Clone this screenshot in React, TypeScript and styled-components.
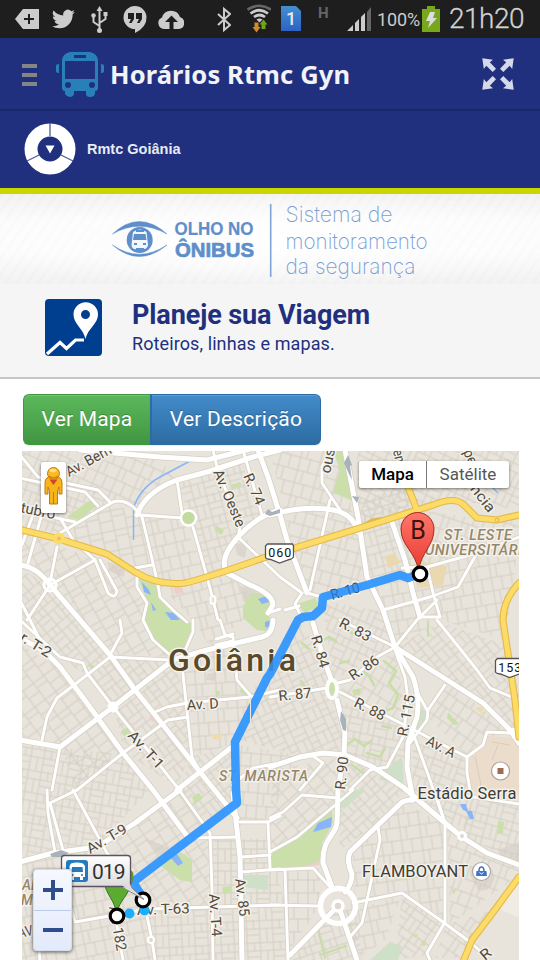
import React from "react";
import styled, { createGlobalStyle, css } from "styled-components";

const Global = createGlobalStyle`
  * { box-sizing: border-box; }
  html, body { margin: 0; padding: 0; }
  body { width: 540px; height: 960px; overflow: hidden; background: #fff; font-family: Roboto, "Noto Sans", sans-serif; }
  svg { display: block; }
`;

const Screen = styled.div`
  display: flex;
  flex-direction: column;
  width: 540px;
  height: 960px;
  overflow: hidden;
  background: #fff;
`;

/* ---------- status bar ---------- */

const StatusBar = styled.div`
  display: flex;
  align-items: center;
  height: 38px;
  flex: none;
  background: #1e1e1e;
  color: #ccc;
  padding-left: 15px;
`;

const Slot = styled.div<{ $w: number; $gap?: number }>`
  flex: none;
  width: ${(p) => p.$w}px;
  margin-right: ${(p) => p.$gap ?? 0}px;
`;

const Network = styled(Slot)`
  height: 26px;
  font: 700 15px/15px Roboto, sans-serif;
  color: #666;
`;

const Percent = styled(Slot)`
  font-size: 18px;
  line-height: 38px;
  padding-top: 1px;
  letter-spacing: -0.1px;
  white-space: nowrap;
`;

const Clock = styled.div`
  font-size: 28px;
  line-height: 36px;
  font-weight: 300;
  color: #d2d2d2;
  letter-spacing: -0.5px;
  padding-left: 1px;
  -webkit-text-stroke: 0.3px #d2d2d2;
`;

/* ---------- app header ---------- */

const Header = styled.header`
  display: flex;
  align-items: center;
  flex: none;
  height: 73px;
  background: #20307f;
  border-bottom: 2px solid #1a2768;
  padding: 0 26px 0 22px;
`;

const Menu = styled.div`
  display: flex;
  flex-direction: column;
  gap: 5px;
  width: 15px;
  margin: 2px 19px 0 0;
`;

const MenuBar = styled.span`
  height: 4px;
  background: #858585;
`;

const Title = styled.h1`
  flex: 1;
  margin: 0 0 0 6px;
  color: #f1f3f8;
  font: 700 25.5px/36px "Noto Sans", "Open Sans", sans-serif;
  letter-spacing: 0.12px;
  white-space: nowrap;
`;

const Brand = styled.div`
  display: flex;
  align-items: center;
  flex: none;
  height: 83px;
  padding: 0 0 2px 24px;
  gap: 10px;
  background: #20307f;
  border-bottom: 6px solid #cbd600;
`;

const Promo = styled.div`
  flex: none;
  height: 90px;
  background: radial-gradient(ellipse 60% 55% at 50% 50%, rgba(255, 255, 255, 0.95), rgba(255, 255, 255, 0) 100%),
    repeating-linear-gradient(125deg, rgba(0, 0, 0, 0.012) 0 2px, transparent 4px 9px),
    linear-gradient(#f2f2f2, #fcfcfc 30%, #fcfcfc 65%, #f2f2f2);
`;

/* ---------- section title ---------- */

const Section = styled.section`
  display: flex;
  flex: none;
  height: 95px;
  padding: 15px 0 0 45px;
  gap: 30px;
  background: #f5f5f5;
  border-bottom: 2px solid #c6c6c6;
  color: #20307f;
`;

const SectionTitle = styled.h2`
  margin: 0;
  font-size: 27px;
  line-height: 32px;
  font-weight: 700;
  letter-spacing: -0.1px;
`;

const SectionText = styled.p`
  margin: 0;
  font-size: 18px;
  line-height: 26px;
  letter-spacing: 0.1px;
`;

const Tabs = styled.div`
  display: flex;
  flex: none;
  margin: 15px 0 6px 23px;
`;

const Tab = styled.button<{ $kind: "map" | "text" }>`
  height: 51px;
  padding: 0 0 1px;
  font: 400 21px Roboto, sans-serif;
  letter-spacing: 0.2px;
  color: #fff;
  text-shadow: 0 -1px 0 rgba(0, 0, 0, 0.25);
  ${(p) =>
    p.$kind === "map"
      ? css`
          width: 127px;
          border: 1px solid #419641;
          border-right: 0;
          border-radius: 6px 0 0 6px;
          background: linear-gradient(#5cb85c, #419641);
        `
      : css`
          width: 171px;
          border: 1px solid #2d6ca2;
          border-left-width: 2px;
          border-radius: 0 6px 6px 0;
          background: linear-gradient(#428bca, #2d6ca2);
        `}
  box-shadow: inset 0 1px 0 rgba(255, 255, 255, 0.15), 0 1px 1px rgba(0, 0, 0, 0.08);
`;

/* ---------- map ---------- */

const MapFrame = styled.div`
  position: relative;
  width: 497px;
  height: 509px;
  flex: none;
  margin-left: 22px;
  overflow: hidden;
  background: #e8e4db;
`;

const PegmanBox = styled.div`
  position: absolute;
  left: 19px;
  top: 11px;
  width: 25px;
  height: 51px;
  border-radius: 2px;
  background: #fff;
  box-shadow: 0 1px 3px rgba(0, 0, 0, 0.5);
`;

const MapTypes = styled.div`
  position: absolute;
  right: 10px;
  top: 10px;
  display: flex;
  height: 27px;
  background: #fff;
  border-radius: 2px;
  box-shadow: 0 1px 3px rgba(0, 0, 0, 0.5);
`;

const MapType = styled.div<{ $active?: boolean }>`
  width: ${(p) => (p.$active ? 67 : 83)}px;
  text-align: center;
  font-size: 17px;
  line-height: 27px;
  font-weight: ${(p) => (p.$active ? 500 : 400)};
  color: ${(p) => (p.$active ? "#000" : "#565656")};
  border-left: ${(p) => (p.$active ? "0" : "1px solid #777")};
`;

const ZoomBox = styled.div`
  position: absolute;
  left: 11px;
  top: 418px;
  width: 39px;
  height: 82px;
  display: flex;
  flex-direction: column;
  border-radius: 4px;
  border: 1px solid #d4dcef;
  background: linear-gradient(#f5f8ff, #e3eafb);
  box-shadow: 0 1px 3px 1px rgba(60, 60, 60, 0.55);
`;

const ZoomButton = styled.div`
  flex: 1;
  display: flex;
  align-items: center;
  justify-content: center;
  & + & {
    border-top: 1px solid #bccbe8;
  }
`;

const major = [
  "M80 450 160 457 207 460 250 449",
  "M258 450 268 477 280 515 287 540 307 593",
  "M20 565 Q37 567 50 585L80 620 110 655 135 690 163 725 200 772 237 818",
  "M20 640Q38 643 60 667L87 703 123 753 153 790 190 840",
  "M345 450 358 517 367 577 383 610 395 647 413 677Q420 697 417 717L408 743 407 767 413 800",
  "M392 522 405 560 413 593 420 617",
  "M395 647 447 680 483 703 510 730 519 743M510 732L519 728",
  "M20 740 60 747 113 707 173 660 207 650 262 637Q273 634 273 620",
  "M270 767 300 757 323 753 345 755 373 767 403 787 445 823 462 837 487 853 519 865",
  "M313 623 323 657 332 682M337 700 345 733 344 753 338 790 337 823C336 835 322 838 323 863L332 887",
  "M413 800Q403 800 400 804L350 852Q346 860 352 874 352 884 345 892",
  "M280 510Q258 515 238 537T227 573L250 585Q273 594 273 605L268 613",
  "M137 515Q145 492 177 480L207 472 253 457 280 450",
  "M337 907 290 955M340 910 357 960",
  "M233 793 240 857 242 960",
  "M177 790 232 747M180 790 135 823 97 847 53 853 20 862",
  "M270 515Q300 506 327 509T357 532",
];

const middle = [
  "M177 480 182 513M193 527 207 577 213 600 218 620M140 515 183 518",
  "M20 455 38 477 98 490 110 502M20 478 85 492 98 506",
  "M60 533 113 502Q128 497 142 517L153 563 158 585 160 597 173 610 187 622",
  "M60 518 73 540 95 560 108 593Q115 600 117 591L100 560",
  "M50 585 95 560M50 585 27 620M57 547 50 583M20 510 75 522",
  "M243 450 262 515M213 450 217 467 240 527 238 537 280 577 302 593",
  "M43 510 28 563M34 512 22 545M135 568 152 565M137 572V587L147 603 143 620 153 640 170 655",
  "M322 467V483L332 498 342 513M330 500 310 590M322 467 330 450",
  "M402 568 427 567 477 553 519 537M427 567 433 593 440 617M383 610 430 597 458 587 477 553",
  "M437 600 417 620 395 647M437 620 477 670 490 688 519 700M420 617H440",
  "M467 757 483 745 487 732 510 733M467 757V773L470 790",
  "M395 647 377 657 350 680 338 683M270 697 327 688M340 692 410 728 467 757M340 620 395 647",
  "M445 685 428 710 427 720 410 743M427 710 416 690",
  "M395 650 405 677 408 700 403 737 387 767 370 770 350 790",
  "M300 790 323 763 314 757M413 733 430 780 445 823V922L427 953 430 960",
  "M353 903 402 893 443 922 470 942 487 957M270 905 318 906",
  "M270 870 313 868 330 887M285 870 288 960M378 827 380 840 362 923 350 937",
  "M270 818 283 812 302 795 338 798M353 790 297 837 270 852",
  "M20 620 60 657 83 663 87 673 113 707 150 753 177 787 210 833 212 890 213 960",
  "M60 747 52 790M42 740 47 717 57 698 87 675 110 657 170 660M110 655 122 633 120 620",
  "M77 790 123 753 168 720 188 717M155 712 167 707 187 703 250 697 280 690",
  "M182 665 192 757 200 772M193 620V632L183 655M193 838 237 837M240 822 268 822 280 816",
  "M268 822 270 868M242 872 280 869M241 857 270 855",
  "M75 922 115 915 147 909 280 905M75 922 65 888",
  "M73 790 107 853 143 897 152 940 155 960M50 803 77 790M63 850 50 803M55 852 48 813 47 790",
  "M220 620 225 635 233 637 237 680 250 695M216 639 233 634M216 645 233 641",
  "M232 785 253 768 280 763M307 593 322 597M302 593 295 604 303 620M285 610 299 606",
  "M20 600 40 640M115 915 123 960M36 920 40 960M445 823 437 798M460 795 519 804",
  "M268 613 280 609",
];

const parks = [
  "67,517 90,500 97,505 80,520",
  "138,578 157,584 160,597 187,620 193,625 183,650 170,654 153,640 144,622 148,603",
  "250,593 268,593 273,603 269,615 272,632 257,630 243,618 243,607",
  "333,450 345,450 357,503 333,492 340,470",
  "270,853 300,838 332,808 333,823 322,843 323,860 300,867 270,867",
  "157,863 177,850 192,860 192,882 180,880",
  "297,604 315,598 320,606 305,613",
  "215,690 221,692 217,697",
  "243,686 246,694 239,692",
  "88,663 96,667 92,671",
  "121,731 129,727 132,734 124,736",
  "216,525 224,531 221,535 215,530",
  "230,485 240,482 242,485 233,489",
  "192,797 199,793 203,798 195,804",
  "222,887 232,886 231,893 223,893",
  "498,821 504,822 503,833 497,834",
  "411,935 418,934 416,938",
  "422,941 426,941 425,946 421,945",
  "448,712 459,724 454,725 447,718",
  "452,890 457,889 453,895",
  "352,690 361,688 360,694 354,696",
];

const pale = [
  "418,703 428,715 420,732 415,725",
  "390,942 402,946 398,960 370,960",
  "335,806 355,790 366,790 344,809",
  "242,875 268,875 268,890 242,887",
  "378,780 391,765 402,757 404,783",
];

const waters = [
  "142,582 149,590 151,595 144,592",
  "151,602 156,610 153,611",
  "165,612 174,613 180,620 171,620",
  "258,599 269,595 269,602 262,604",
  "313,832 318,823 332,817 331,827",
  "171,858 177,854 183,863 178,866",
  "460,804 466,804 468,812 463,810",
  "466,811 472,811 474,819 470,819",
  "265,622 271,620 270,628 265,627",
];

const blocks: [string, number, string][] = [
  ["22,451 80,451 160,458 175,480 145,497 140,513 113,500 60,485 22,478", 24, "a"],
  ["22,478 98,492 110,503 60,533 22,528", 20, "b"],
  ["60,535 113,504 140,515 153,563 135,570 107,552", 78, "a"],
  ["142,518 182,518 207,576 175,582 155,578", -13, "a"],
  ["177,480 240,460 262,512 226,555 225,570 208,575", -15, "b"],
  ["22,532 135,574 146,606 152,640 170,657 110,654 50,585 22,565", 60, "a"],
  ["22,570 48,584 110,655 85,674 60,658 22,620", -40, "b"],
  ["160,586 225,573 250,586 243,620 210,647 193,620", -14, "a"],
  ["110,657 170,660 113,706 87,674", 53, "b"],
  ["22,645 58,668 120,752 77,790 60,747 22,738", 53, "a"],
  ["22,742 60,748 124,754 150,790 97,846 22,860", 10, "b"],
  ["114,708 172,661 188,700 190,755 177,787 124,752", 53, "b"],
  ["184,665 228,637 237,680 270,690 235,743 194,757", -4, "a"],
  ["190,757 232,747 236,800 210,830 180,790", -38, "b"],
  ["100,847 180,792 210,832 212,905 147,908", 56, "a"],
  ["22,864 97,848 143,898 152,960 22,960", -12, "a"],
  ["145,911 285,905 288,960 155,960", -3, "b"],
  ["213,840 270,838 285,905 213,905", 0, "b"],
  ["240,745 300,755 270,818 240,825", 5, "a"],
  ["270,675 298,620 322,655 345,750 300,756 240,740", 65, "b"],
  ["269,451 340,451 366,578 322,597 300,590 285,510", 15, "a"],
  ["355,503 410,485 427,567 368,578", -15, "b"],
  ["418,510 490,520 519,516 519,537 427,567", 18, "a"],
  ["357,451 519,451 519,510 455,500 358,525", 25, "b"],
  ["369,580 519,540 505,640 440,620 395,647", -10, "a"],
  ["440,622 505,645 519,690 519,735 447,680 396,647", 50, "b"],
  ["322,600 382,612 395,647 333,680", 24, "b"],
  ["337,692 395,650 408,725", 32, "a"],
  ["339,700 410,728 400,785 345,755", 12, "b"],
  ["425,715 447,682 510,730 485,745 468,757", 35, "a"],
  ["412,740 468,760 472,830 445,822 413,800", 20, "b"],
  ["272,770 345,757 338,797 285,870 270,850", 48, "a"],
  ["345,757 405,790 375,825 340,850 338,800", 48, "b"],
  ["353,855 378,828 403,802 445,825 445,920 402,893 355,900", -8, "a"],
  ["286,870 320,868 320,905 290,950", 0, "a"],
  ["290,955 337,908 355,903 362,960 290,960", -18, "b"],
  ["343,915 402,894 385,940 357,960", -12, "a"],
  ["447,824 519,868 519,875 450,925", 20, "a"],
  ["402,894 443,923 427,955 395,960", 35, "b"],
  ["446,925 493,910 465,958 435,958", 35, "a"],
  ["470,760 484,748 487,795 519,805 519,862 462,836", 15, "b"],
];

const yellows = [
  "M22 530 59 539 107 554 135 572Q158 586 185 583 207 578 263 558L295 548 370 525 433 505Q455 496 464 505L477 518 497 520 519 515",
  "M417 510 408 487 395 450",
  "M519 583Q503 600 503 620L507 647 515 700 519 737",
  "M519 877 497 907 472 940 463 962",
];

/* text, x, y, angle, length */
type Label = [string, number, number, number, number];
const labels: Label[] = [
  ["Av. Bern", 69, 477, -29, 50],
  ["tubro", 20, 512, 12, 35],
  ["Av. Oeste", 213, 472, 67, 61],
  ["R. 74", 243, 476, 66, 33],
  ["ous", 330, 474, -78, 25],
  ["gen", 391, 444, 76, 20],
  ["pe", 463, 452, 65, 15],
  ["ência", 464, 482, 52, 40],
  ["R. 10", 332, 600, -16, 30],
  ["R. 83", 338, 626, 28, 34],
  ["R. 84", 311, 637, 74, 33],
  ["R. 86", 353, 681, -34, 33],
  ["R. 87", 279, 701, -6, 33],
  ["R. 88", 353, 706, 27, 33],
  ["R. 115", 407, 737, -79, 42],
  ["R. 90", 345, 790, -84, 33],
  ["Av. A", 425, 744, 27, 31],
  ["Av. D", 187, 710, -3, 32],
  ["r. T-2", 19, 640, 32, 34],
  ["Av. T-1", 127, 736, 48, 46],
  ["Av. T-9", 90, 854, -30, 44],
  ["Av. T-63", 137, 915, -2, 53],
  ["Av. 85", 235, 879, 83, 38],
  ["Av. T-4", 209, 894, 86, 43],
  ["Av. 182", 109, 907, 80, 45],
  ["AV", 19, 938, -12, 15],
  ["R", 485, 961, -40, 10],
];

function Street({ l }: { l: Label }) {
  return (
    <text
      transform={`translate(${l[1]} ${l[2]}) rotate(${l[3]})`}
      textLength={l[4]}
      lengthAdjust="spacingAndGlyphs"
      fontSize="14.5"
      fill="#514a40"
      stroke="#f4f1ea"
      strokeWidth="3"
      paintOrder="stroke"
      strokeLinejoin="round"
    >
      {l[0]}
    </text>
  );
}

function Shield({ x, y, n }: { x: number; y: number; n: string }) {
  return (
    <g transform={`translate(${x} ${y})`}>
      <path d="M2 1H27L28 3V14Q27 16 24 16.5L14 20 5 16.5Q0 16 0 14V3Z" fill="#fff" stroke="#555" strokeWidth="1.3" />
      <text x="14.2" y="14" fontSize="12.5" textAnchor="middle" textLength="23" fill="#111">
        {n}
      </text>
    </g>
  );
}

function Stop({ x, y }: { x: number; y: number }) {
  return <circle cx={x} cy={y} r="6.8" fill="#fff" stroke="#000" strokeWidth="3.2" />;
}

function CityMap() {
  const halo = { stroke: "#f4f1ea", strokeWidth: 3, paintOrder: "stroke", strokeLinejoin: "round" as const };
  return (
    <svg width="497" height="509" viewBox="22 451 497 509" fontFamily="Roboto, sans-serif">
      <defs>
        {blocks.map((b, i) => (
          <pattern
            key={i}
            id={`grid${i}`}
            width={b[2] === "a" ? 20 : 26}
            height={b[2] === "a" ? 26 : 22}
            patternUnits="userSpaceOnUse"
            patternTransform={`translate(${(i * 7) % 11} ${(i * 5) % 9}) rotate(${b[1]})`}
          >
            <path
              d={b[2] === "a" ? "M0 1H20M0 14H20M1 0V26M11 0V14M7 14V26" : "M0 1H26M0 9H26M14 15H26M1 0V22M14 0V22M8 9V22M21 0V9"}
              fill="none"
              stroke="#d0cbc0"
              strokeWidth=".85"
            />
          </pattern>
        ))}
        <linearGradient id="pinRed" x1="0" y1="0" x2="0" y2="1">
          <stop offset="0" stopColor="#ff776b" />
          <stop offset="1" stopColor="#e8392f" />
        </linearGradient>
        <linearGradient id="callout" x1="0" y1="0" x2="0" y2="1">
          <stop offset="0" stopColor="#fff" />
          <stop offset="1" stopColor="#dcdcdc" />
        </linearGradient>
      </defs>

      <rect x="22" y="451" width="497" height="509" fill="#e8e4db" />
      <g fill="#dcd6cf">
        <path d="M107 562 125 567 124 577 110 572ZM235 545 248 540 245 558 237 555ZM240 586 258 588 255 600 243 602ZM470 875Q470 864 482 864 495 866 494 880 490 893 478 890Z" />
        <path d="M498 850 519 842V865L500 856ZM145 838 165 846 177 855 160 856ZM207 674 216 672 215 681 206 680Z" />
      </g>
      {blocks.map((b, i) => (
        <polygon key={i} points={b[0]} fill={`url(#grid${i})`} />
      ))}
      <path d="M487 736 519 738V795L500 798 470 790 467 760 484 746Z" fill="#ecdccb" />
      <path d="M492 742 510 745M475 756 482 790M498 745 492 760" fill="none" stroke="#d8cdbf" />
      <path d="M519 884V918L498 908Z" fill="#f0ece3" />
      <path d="M408 565 432 562 447 566 443 585 420 588ZM385 557 395 553 400 563 388 568Z" fill="#ead9b0" />
      <path d="M300 862 318 857 320 865 302 867ZM173 588 181 586 183 592 176 595ZM149 717 154 714 156 720 152 722Z" fill="#edcfca" />
      <path d="M212 735 222 734 221 740 213 739ZM475 708 484 706 482 714Z" fill="#ecdcae" />
      {parks.map((p) => (
        <polygon key={p} points={p} fill="#cadfaa" />
      ))}
      {pale.map((p) => (
        <polygon key={p} points={p} fill="#cfe0c8" />
      ))}
      <g fill="none" stroke="#c8dda8" strokeWidth="3" strokeLinecap="round">
        <path
          d="M384 661 396 671 389 683 398 695 393 708 383 712M362 670 369 676 374 685M348 744 355 739 364 746 371 741M367 753 380 757 385 748M352 765 366 775M324 640 329 637 336 641M340 663 349 661M302 643 309 649M382 726 391 728M349 632 357 635M301 681 306 688"
          strokeWidth="2.6"
        />
        <path d="M428 622V636M320 955 346 946M318 930 325 958" strokeWidth="2" />
      </g>
      {waters.map((p) => (
        <polygon key={p} points={p} fill="#8ab4f8" />
      ))}
      <path d="M133.500 540V508Q140 488 160 477L190 461M492 487 498 493" fill="none" stroke="#8ab4f8" strokeWidth="1.500" />

      <g fill="none" strokeLinejoin="round" strokeLinecap="round">
        <g stroke="#d6d0c4">
          {middle.map((d) => (
            <path key={d} d={d} strokeWidth="4.4" />
          ))}
          {major.map((d) => (
            <path key={d} d={d} strokeWidth="6.6" />
          ))}
        </g>
        <g stroke="#fff">
          {middle.map((d) => (
            <path key={d} d={d} strokeWidth="2.9" />
          ))}
          {major.map((d) => (
            <path key={d} d={d} strokeWidth="5" />
          ))}
          <circle cx="338" cy="906" r="17.5" strokeWidth="5.5" />
          <circle cx="338" cy="906" r="5" strokeWidth="3.5" fill="#ddd9d0" />
          <circle cx="188.500" cy="518" r="7.500" strokeWidth="2.5" fill="#c2dba0" />
          <ellipse cx="332" cy="689" rx="5" ry="9" strokeWidth="4" fill="#cadfaa" />
          <circle cx="50" cy="585" r="6" strokeWidth="3" />
          <circle cx="462" cy="836" r="3.500" strokeWidth="3" fill="#ddd9d0" />
          <circle cx="151" cy="940" r="3" strokeWidth="2" fill="#ddd9d0" />
          <circle cx="113" cy="707" r="4" strokeWidth="3" />
          <ellipse cx="213" cy="600" rx="2.500" ry="4" strokeWidth="2" fill="#e8e4db" />
        </g>
        {yellows.map((d) => (
          <path key={d} d={d} stroke="#e3b84c" strokeWidth="7.2" />
        ))}
        <path d="M365 526Q375 518 385 521" stroke="#e3b84c" strokeWidth="6" />
        {yellows.map((d) => (
          <path key={d} d={d} stroke="#fcdc66" strokeWidth="5" />
        ))}
        <circle cx="59" cy="538.500" r="4" stroke="#fcdc66" strokeWidth="4" fill="#e8c060" />
        <circle cx="497" cy="520" r="2" stroke="#e3b84c" strokeWidth="1" />
      </g>
      <path
        d="M265 514 268 509 272 512 280 509V513L270 516ZM344 463 348 455 352 465 350 466 352 480 349 474ZM352 496 359 497 357 503ZM340 720 341 711 346 719 346 731 343 730ZM50 854 61 850 69 853 62 857 52 857Z"
        fill="#a9b2bb"
      />

      <Shield x={265.5} y={543} n="060" />
      <Shield x={495.5} y={657.5} n="153" />
      <text x="168" y="671" fontSize="32" fontWeight="500" textLength="128" fill="#5b4a2a" {...halo}>
        Goiânia
      </text>
      <g fill="#94866a" fontStyle="italic" fontWeight="500" fontSize="14.500">
        <text x="444" y="540" textLength="68" {...halo}>ST. LESTE</text>
        <text x="425" y="555" textLength="97" {...halo}>UNIVERSITÁRI</text>
        <text x="219" y="781" fontSize="14" textLength="89" {...halo}>ST. MARISTA</text>
        <text x="22" y="890" fontSize="14" {...halo}>AL</text>
        <text x="21" y="905" fontSize="14" {...halo}>ME</text>
      </g>
      {labels.map((l, i) => (
        <Street key={i} l={l} />
      ))}
      <g fill="#403c36" fontSize="16.500">
        <text x="417.500" y="799" textLength="99" {...halo}>Estádio Serra</text>
        <text x="362" y="877" textLength="106" {...halo}>FLAMBOYANT</text>
      </g>
      <circle cx="500.500" cy="771" r="9" fill="#fff" stroke="#a9a29a" strokeWidth="1.2" />
      <rect x="497.500" y="768" width="6" height="6" fill="#a06a50" />
      <circle cx="481.500" cy="871.500" r="9" fill="#fff" stroke="#a9a9a9" strokeWidth="1.2" />
      <path d="M476.500 871H486.500L487 876H476Z" fill="#4272c4" />
      <path d="M479 871Q479 867 481.500 867T484 871" fill="none" stroke="#4272c4" strokeWidth="1.600" />
      <path d="M479.500 872.500Q481.500 875.500 483.500 872.500" fill="none" stroke="#fff" />

      <path
        d="M419 574 408 578 400 575 367 585 323 597 322 608 313 616 303 617 298 620 270 674 267 678 235 742 236 790 237 803 133 882 143 898"
        fill="none"
        stroke="#3096ff"
        strokeOpacity=".94"
        strokeWidth="8.500"
        strokeLinejoin="round"
      />
      <path d="M250.500 697V722" stroke="#eee9df" strokeWidth="1" />
      <text transform="translate(332 600) rotate(-16)" textLength="30" fontSize="14.500" fill="#354b70" fillOpacity=".4">
        R. 10
      </text>
      <text x="168" y="671" fontSize="32" fontWeight="500" textLength="128" fill="#5b4a2a" fillOpacity=".15">
        Goiânia
      </text>

      <path d="M418.500 571C416 552 401 546 401 529A16.500 16.500 0 0 1 434 529C434 546 421 552 418.500 571Z" fill="url(#pinRed)" stroke="#a5281f" strokeWidth="1" />
      <text x="418" y="539" fontSize="25" textAnchor="middle" fill="#3b1411">
        B
      </text>
      <Stop x={420} y={574} />

      <path d="M116.500 914C115 900 106 895 104 882H131C130 895 119 900 116.500 914Z" fill="#5cab31" stroke="#38761d" />
      <path d="M129 870Q136 870 132 884Z" fill="#4f9b2a" />
      <circle cx="129.500" cy="913.500" r="5" fill="#1aaeff" />
      <circle cx="144.500" cy="910.500" r="5" fill="#1aaeff" />
      <Stop x={117} y={916} />
      <Stop x={143} y={900} />
      <path d="M118 885H131V887L144 899.500Z" fill="#dcdcdc" stroke="#777" strokeWidth=".8" />
      <rect x="61.500" y="855.500" width="69" height="31" rx="3" fill="url(#callout)" stroke="#5c5260" strokeWidth="1.300" />
      <path d="M120 884H130L132 889 126 888Z" fill="#dcdcdc" />
      <rect x="66" y="860" width="22" height="22" rx="3" fill="#2579bf" />
      <path d="M71 863.500Q77 861.500 83 863.500L85 866V877H83V880H80V877H74V880H71V877H69.500V866Z" fill="#fff" />
      <path d="M72 867H82.500L83 872H71.500Z" fill="#2579bf" />
      <circle cx="72.500" cy="875" r="1" fill="#2579bf" />
      <circle cx="82" cy="875" r="1" fill="#2579bf" />
      <text x="92" y="878.500" fontSize="21" textLength="33.500" fill="#333">
        019
      </text>
    </svg>
  );
}

function Pegman() {
  return (
    <svg width="25" height="51" viewBox="0 0 25 51">
      <path d="M6 16Q4 17 4 21V32H7V25L8.500 29V42H16.500V29L18 25V32H21V21Q21 17 19 16L16 14H9Z" fill="#f5b51b" stroke="#c8780d" />
      <path d="M12.500 30V42" stroke="#c8780d" />
      <path d="M8.500 17.500H16.500L12.500 23Z" fill="#d2452b" />
      <circle cx="12.500" cy="11.500" r="6" fill="#f8bb25" stroke="#c8780d" />
      <path d="M8 14Q12.500 18 17 14" fill="none" stroke="#d4810f" strokeWidth="1.500" />
      <ellipse cx="12" cy="8.500" rx="3.500" ry="1.800" fill="#fde08a" />
    </svg>
  );
}

function OlhoLogo() {
  return (
    <svg width="540" height="90" viewBox="0 194 540 90">
      <g fill="#5f8fca">
        <path d="M112.500 234Q139 209 167 234 139 218.500 112.500 234Z" stroke="#5f8fca" strokeWidth=".5" />
        <path d="M112.500 245Q139 268 167 245 139 263.500 112.500 245Z" stroke="#5f8fca" strokeWidth=".5" />
        <circle cx="139.700" cy="240" r="13" />
      </g>
      <path d="M133 232Q139.500 227 146.500 232L148 245Q147 249 144 249L142 250H137L135 249Q132 249 131.500 245Z" fill="#f3f7fc" />
      <path d="M134 234H145.500L146.500 240H133ZM136 230H144V232H136ZM134 243H137V245H134ZM143 243H146V245H143ZM136 248H144V252H136Z" fill="#5f8fca" />
      <g fill="#5f8fca" fontFamily="Liberation Sans, sans-serif" fontWeight="700" stroke="#5f8fca" strokeWidth=".2">
        <text x="174.500" y="235" fontSize="17.500" textLength="79" lengthAdjust="spacingAndGlyphs">OLHO NO</text>
        <text x="175" y="257" fontSize="20" strokeWidth=".7" textLength="79" lengthAdjust="spacingAndGlyphs">ÔNIBUS</text>
      </g>
      <path d="M270.700 204V277" stroke="#7ea4d6" strokeWidth="1.600" />
      <g fill="#7ba0d4" fontFamily="Inter, Roboto, sans-serif" fontWeight="200" fontSize="22">
        <text x="285.500" y="222" textLength="107" lengthAdjust="spacingAndGlyphs">Sistema de</text>
        <text x="285.500" y="248.500" textLength="142" lengthAdjust="spacingAndGlyphs">monitoramento</text>
        <text x="285.500" y="274" textLength="130" lengthAdjust="spacingAndGlyphs">da segurança</text>
      </g>
    </svg>
  );
}

export default function App() {
  return (
    <Screen>
      <Global />
      <StatusBar>
        <Slot $w={24} $gap={13}>
          <svg width="24" height="38">
            <path d="M8 9H24V29H8L0 19Z" fill="#ccc" />
            <path d="M14 14V24M9 19H19" stroke="#1e1e1e" strokeWidth="2" />
          </svg>
        </Slot>
        <Slot $w={23} $gap={16}>
          <svg width="23" height="38" viewBox="0 -7 24 38">
            <path
              fill="#ccc"
              d="M23.950 4.570a10 10 0 0 1-2.820.780 4.960 4.960 0 0 0 2.160-2.730c-.950.560-2 .970-3.130 1.190a4.920 4.920 0 0 0-8.390 4.490A14 14 0 0 1 1.640 3.160a4.920 4.920 0 0 0 1.520 6.570 4.900 4.900 0 0 1-2.230-.610v.060a4.920 4.920 0 0 0 3.950 4.830 5 5 0 0 1-2.210.080 4.940 4.940 0 0 0 4.600 3.420A9.870 9.870 0 0 1 0 19.540 14 14 0 0 0 7.550 21.750c9.050 0 14-7.500 14-13.980l-.020-.640a9.900 9.900 0 0 0 2.420-2.560z"
            />
          </svg>
        </Slot>
        <Slot $w={17} $gap={15}>
          <svg width="17" height="38" fill="none" stroke="#ccc" strokeWidth="2">
            <path d="M8.500 10V30M8.500 26 2.500 22V17M8.500 23 14.500 19V14" />
            <path d="M8.500 6 11.500 11H5.500ZM12.500 12H16.500V16H12.500Z" fill="#ccc" stroke="none" />
            <circle cx="2.500" cy="15.500" r="2.300" fill="#ccc" stroke="none" />
            <circle cx="8.500" cy="30.500" r="2.500" fill="#ccc" stroke="none" />
          </svg>
        </Slot>
        <Slot $w={24} $gap={11}>
          <svg width="24" height="38">
            <path d="M12 6A11.500 11.500 0 0 0 12 29V33Q24 27 23.500 17A11.500 11.500 0 0 0 12 6Z" fill="#ccc" />
            <path d="M5 13H11V19L8.500 23H6L8 19H5ZM13 13H19V19L16.500 23H14L16 19H13Z" fill="#1e1e1e" />
          </svg>
        </Slot>
        <Slot $w={26} $gap={33}>
          <svg width="26" height="38">
            <path d="M6 29A6 6 0 0 1 4 17.500 9.500 9.500 0 0 1 22 17 6.200 6.200 0 0 1 21 29Z" fill="#ccc" />
            <path d="M13.500 15.500 20 22H15.500V29H11.500V22H7Z" fill="#1e1e1e" />
          </svg>
        </Slot>
        <Slot $w={14} $gap={16}>
          <svg width="14" height="38">
            <path d="M1 14 13 25 7 30V9L13 14 1 25" fill="none" stroke="#ccc" strokeWidth="2" />
          </svg>
        </Slot>
        <Slot $w={24} $gap={10}>
          <svg width="24" height="38" fill="none" strokeWidth="2.700">
            <path d="M.500 9.500Q12.500 2 24 9.500" stroke="#666" />
            <path d="M3.500 13.500Q12.500 7 21 13.500M7 17Q12.500 13 18 17" stroke="#ccc" />
            <path d="M9.500 19.500Q12.500 17.500 15.500 19.500L12.500 22.500Z" fill="#ccc" stroke="none" />
            <path d="M7.500 22.500H11.500V27H13.500L9.500 32.500 5.500 27H7.500Z" fill="#d58a2d" />
            <path d="M14.500 29H18.500V24.500H20.500L16.500 19.500 12.500 24.500H14.500Z" fill="#6fa516" />
          </svg>
        </Slot>
        <Slot $w={20} $gap={17}>
          <svg width="20" height="38">
            <defs>
              <linearGradient id="sim" x1="0" y1="0" x2="0" y2="1">
                <stop offset="0" stopColor="#438fd0" />
                <stop offset="1" stopColor="#2d62c4" />
              </linearGradient>
            </defs>
            <path d="M0 6H15L20 11V31H0Z" fill="url(#sim)" />
            <text x="10" y="25" textAnchor="middle" fontSize="18" fontWeight="500" fill="#e8e8e8" fontFamily="Roboto, sans-serif">
              1
            </text>
          </svg>
        </Slot>
        <Network $w={11} $gap={18}>H</Network>
        <Slot $w={24} $gap={6}>
          <svg width="24" height="38">
            <path d="M0 31 6 25V31ZM8 23 12 19V31H8ZM14 17 18 13V31H14Z" fill="#ccc" />
            <path d="M20 12 24 7V31H20Z" fill="#666" />
          </svg>
        </Slot>
        <Percent $w={43} $gap={2}>100%</Percent>
        <Slot $w={18} $gap={8}>
          <svg width="18" height="38">
            <path d="M5 6H13V9H18V32H0V9H5Z" fill="#77a81b" />
            <path d="M8 12H13L11 18H15L6 28 8 21H4Z" fill="#ddd" />
          </svg>
        </Slot>
        <Clock>21h20</Clock>
      </StatusBar>

      <Header>
        <Menu>
          <MenuBar />
          <MenuBar />
          <MenuBar />
        </Menu>
        <svg width="48" height="47" viewBox="0 -1 48 47" fill="#2980b9">
          <path
            fillRule="evenodd"
            d="M14 1H34Q42 3 42 10V37Q42 40 39 40V43Q38 46 34 46T30 43V40H18V43Q17 46 14 46T9 43V40Q6 40 6 37V10Q6 3 14 1ZM18 4V7H30V4ZM9 10V28H39V10ZM12 31A3 3 0 1 0 12 37A3 3 0 1 0 12 31ZM36 31A3 3 0 1 0 36 37A3 3 0 1 0 36 31Z"
          />
          <path d="M0 15Q0 13 3 13V22Q0 22 0 20ZM45 13Q48 13 48 15V20Q48 22 45 22Z" />
        </svg>
        <Title>Horários Rtmc Gyn</Title>
        <svg width="32" height="32" viewBox="0 0 32 32" fill="#d5d9ea">
          {[0, 90, 180, 270].map((a) => (
            <path key={a} transform={`rotate(${a} 16 16)`} d="M.300 .300 11 1.800 7.800 4.300 14 10.700 10.700 14 4.300 7.800 1.800 11Z" />
          ))}
        </svg>
      </Header>

      <Brand>
        <svg width="52" height="52" viewBox="0 0 52 52">
          <circle cx="26" cy="26" r="19" fill="none" stroke="#fff" strokeWidth="13" />
          <path d="M26 0V13M15 32 3 38M37 32 49 38" stroke="#4d5b9b" strokeWidth="1.300" />
          <path d="M21.500 22.500H30.500L26 30.500Z" fill="#fff" />
        </svg>
        <svg width="98" height="24" viewBox="0 0 98 24">
          <text x="1" y="16.500" fontSize="14" fontWeight="700" fontFamily="Liberation Sans, sans-serif" textLength="93.500" lengthAdjust="spacingAndGlyphs" fill="#e8ebf5">
            Rmtc Goiânia
          </text>
        </svg>
      </Brand>

      <Promo>
        <OlhoLogo />
      </Promo>

      <Section>
        <svg width="57" height="57" viewBox="0 0 57 57">
          <rect width="57" height="57" rx="4" fill="#003e8f" />
          <path
            fillRule="evenodd"
            d="M40.500 40C38 29 28.500 25 28.500 15.500A12 12 0 0 1 53 15.500C53 25 43 29 40.500 40ZM40.500 11A4.500 4.500 0 1 0 40.500 20A4.500 4.500 0 1 0 40.500 11Z"
            fill="#fff"
          />
          <path d="M2 55 15 43.500 21.500 49.500 30.500 41H39" fill="none" stroke="#fff" strokeWidth="3.200" />
        </svg>
        <div>
          <SectionTitle>Planeje sua Viagem</SectionTitle>
          <SectionText>Roteiros, linhas e mapas.</SectionText>
        </div>
      </Section>

      <Tabs>
        <Tab $kind="map">Ver Mapa</Tab>
        <Tab $kind="text">Ver Descrição</Tab>
      </Tabs>

      <MapFrame>
        <CityMap />
        <PegmanBox>
          <Pegman />
        </PegmanBox>
        <MapTypes>
          <MapType $active>Mapa</MapType>
          <MapType>Satélite</MapType>
        </MapTypes>
        <ZoomBox>
          <ZoomButton>
            <svg width="20" height="20">
              <path d="M10 0V20M0 10H20" stroke="#2f4d8c" strokeWidth="4" />
            </svg>
          </ZoomButton>
          <ZoomButton>
            <svg width="20" height="20">
              <path d="M0 10H20" stroke="#2f4d8c" strokeWidth="4" />
            </svg>
          </ZoomButton>
        </ZoomBox>
      </MapFrame>
    </Screen>
  );
}
